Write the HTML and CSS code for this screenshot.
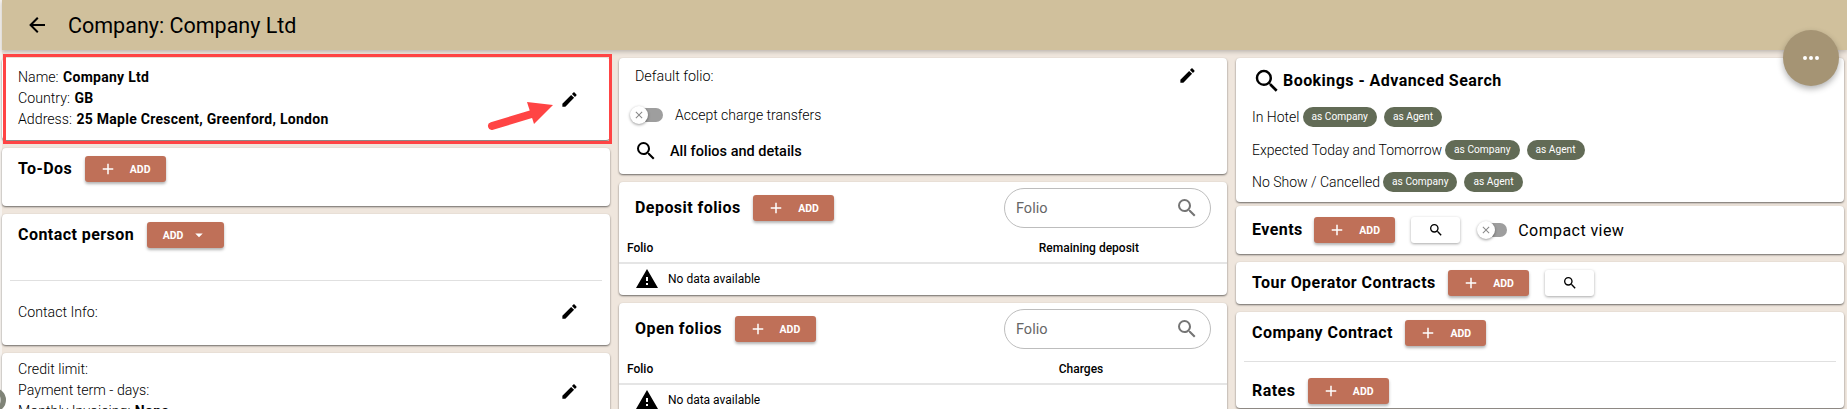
FILE: index.html
```html
<!DOCTYPE html>
<html lang="en">
<head>
  <meta charset="UTF-8">
  <title>Company: Company Ltd</title>
  <link rel="stylesheet" href="styles.css">
</head>
<body>

  <svg class="sprite" xmlns="http://www.w3.org/2000/svg">
    <symbol id="i-back" viewBox="0 0 24 24"><path d="M20,11V13H8L13.5,18.5L12.08,19.92L4.16,12L12.08,4.08L13.5,5.5L8,11H20Z"/></symbol>
    <symbol id="i-pencil" viewBox="0 0 24 24"><path d="M20.71,7.04C21.1,6.65 21.1,6 20.71,5.63L18.37,3.29C18,2.9 17.35,2.9 16.96,3.29L15.12,5.12L18.87,8.87M3,17.25V21H6.75L17.81,9.93L14.06,6.18L3,17.25Z"/></symbol>
    <symbol id="i-search" viewBox="0 0 24 24"><path d="M9.5,3A6.5,6.5 0 0,1 16,9.5C16,11.11 15.41,12.59 14.44,13.73L14.71,14H15.5L20.5,19L19,20.5L14,15.5V14.71L13.73,14.44C12.59,15.41 11.11,16 9.5,16A6.5,6.5 0 0,1 3,9.5A6.5,6.5 0 0,1 9.5,3M9.5,5C7,5 5,7 5,9.5C5,12 7,14 9.5,14C12,14 14,12 14,9.5C14,7 12,5 9.5,5Z"/></symbol>
    <symbol id="i-alert" viewBox="0 0 24 24"><path d="M13,14H11V10H13M13,18H11V16H13M1,21H23L12,2L1,21Z"/></symbol>
    <symbol id="i-plus" viewBox="0 0 24 24"><path d="M19,13H13V19H11V13H5V11H11V5H13V11H19V13Z"/></symbol>
    <symbol id="i-close" viewBox="0 0 24 24"><path d="M19,6.41L17.59,5L12,10.59L6.41,5L5,6.41L10.59,12L5,17.59L6.41,19L12,13.41L17.59,19L19,17.59L13.41,12L19,6.41Z"/></symbol>
    <symbol id="i-caret" viewBox="0 0 24 24"><path d="M7,10L12,15L17,10H7Z"/></symbol>
    <symbol id="i-dots" viewBox="0 0 24 24"><path d="M16,12A2,2 0 0,1 18,10A2,2 0 0,1 20,12A2,2 0 0,1 18,14A2,2 0 0,1 16,12M10,12A2,2 0 0,1 12,10A2,2 0 0,1 14,12A2,2 0 0,1 12,14A2,2 0 0,1 10,12M4,12A2,2 0 0,1 6,10A2,2 0 0,1 8,12A2,2 0 0,1 6,14A2,2 0 0,1 4,12Z"/></symbol>
  </svg>

  <header class="topbar">
    <svg class="back-icon"><use href="#i-back"/></svg>
    <h1 class="page-title">Company: Company Ltd</h1>
  </header>

  <button class="fab"><svg class="fab-icon"><use href="#i-dots"/></svg></button>
  <div class="edge-dot"></div>

  <main class="columns">

    <section class="column">
      <div class="card card-company">
        <div class="info-lines">
          <div>Name: <b>Company Ltd</b></div>
          <div>Country: <b>GB</b></div>
          <div>Address: <b>25 Maple Crescent, Greenford, London</b></div>
        </div>
        <svg class="pencil"><use href="#i-pencil"/></svg>
        <div class="red-frame"></div>
        <svg class="red-arrow" viewBox="0 0 76 32">
          <path d="M5 26 L48 13" stroke="#ff4444" stroke-width="8" stroke-linecap="round" fill="none"/>
          <path d="M40 2 L66 5 L47 24 Z" fill="#ff4444"/>
        </svg>
      </div>

      <div class="card card-todos">
        <div class="title-row">
          <h2 class="card-title">To-Dos</h2>
          <button class="btn-add"><svg class="plus"><use href="#i-plus"/></svg><span>ADD</span></button>
        </div>
      </div>

      <div class="card card-contact">
        <div class="title-row">
          <h2 class="card-title">Contact person</h2>
          <button class="btn-add btn-menu"><span>ADD</span><svg class="caret"><use href="#i-caret"/></svg></button>
        </div>
        <hr class="divider divider-contact">
        <div class="contact-row">
          <span>Contact Info:</span>
          <svg class="pencil"><use href="#i-pencil"/></svg>
        </div>
      </div>

      <div class="card card-credit">
        <div class="info-lines">
          <div>Credit limit:</div>
          <div>Payment term - days:</div>
          <div>Monthly Invoicing: <b>None</b></div>
        </div>
        <svg class="pencil"><use href="#i-pencil"/></svg>
      </div>
    </section>

    <section class="column">
      <div class="card card-folio">
        <div class="folio-line">
          <span>Default folio:</span>
          <svg class="pencil"><use href="#i-pencil"/></svg>
        </div>
        <div class="switch-line">
          <span class="switch"><span class="switch-thumb"><svg class="switch-x"><use href="#i-close"/></svg></span></span>
          <span>Accept charge transfers</span>
        </div>
        <div class="all-folios">
          <svg class="search-icon"><use href="#i-search"/></svg>
          <b>All folios and details</b>
        </div>
      </div>

      <div class="card card-table">
        <div class="table-head">
          <div class="title-row">
            <h2 class="card-title">Deposit folios</h2>
            <button class="btn-add"><svg class="plus"><use href="#i-plus"/></svg><span>ADD</span></button>
          </div>
          <div class="folio-search"><span>Folio</span><svg class="field-icon"><use href="#i-search"/></svg></div>
        </div>
        <div class="col-heads"><span>Folio</span><span class="col-deposit">Remaining deposit</span></div>
        <div class="no-data"><svg class="alert"><use href="#i-alert"/></svg><span>No data available</span></div>
      </div>

      <div class="card card-table">
        <div class="table-head">
          <div class="title-row">
            <h2 class="card-title">Open folios</h2>
            <button class="btn-add"><svg class="plus"><use href="#i-plus"/></svg><span>ADD</span></button>
          </div>
          <div class="folio-search"><span>Folio</span><svg class="field-icon"><use href="#i-search"/></svg></div>
        </div>
        <div class="col-heads"><span>Folio</span><span class="col-charges">Charges</span></div>
        <div class="no-data"><svg class="alert"><use href="#i-alert"/></svg><span>No data available</span></div>
      </div>
    </section>

    <section class="column">
      <div class="card card-bookings">
        <div class="bookings-title">
          <svg class="bookings-icon"><use href="#i-search"/></svg>
          <h2 class="card-title">Bookings - Advanced Search</h2>
        </div>
        <div class="chip-row"><span>In Hotel</span><span class="chip">as Company</span><span class="chip">as Agent</span></div>
        <div class="chip-row"><span>Expected Today and Tomorrow</span><span class="chip">as Company</span><span class="chip">as Agent</span></div>
        <div class="chip-row"><span>No Show / Cancelled</span><span class="chip">as Company</span><span class="chip">as Agent</span></div>
      </div>

      <div class="card card-events">
        <div class="title-row">
          <h2 class="card-title">Events</h2>
          <button class="btn-add"><svg class="plus"><use href="#i-plus"/></svg><span>ADD</span></button>
          <button class="btn-search"><svg class="btn-search-icon"><use href="#i-search"/></svg></button>
          <span class="switch"><span class="switch-thumb"><svg class="switch-x"><use href="#i-close"/></svg></span></span>
          <span class="compact-label">Compact view</span>
        </div>
      </div>

      <div class="card card-tour">
        <div class="title-row">
          <h2 class="card-title">Tour Operator Contracts</h2>
          <button class="btn-add"><svg class="plus"><use href="#i-plus"/></svg><span>ADD</span></button>
          <button class="btn-search"><svg class="btn-search-icon"><use href="#i-search"/></svg></button>
        </div>
      </div>

      <div class="card card-contract">
        <div class="title-row">
          <h2 class="card-title">Company Contract</h2>
          <button class="btn-add"><svg class="plus"><use href="#i-plus"/></svg><span>ADD</span></button>
        </div>
        <hr class="divider divider-contract">
        <div class="title-row">
          <h2 class="card-title">Rates</h2>
          <button class="btn-add"><svg class="plus"><use href="#i-plus"/></svg><span>ADD</span></button>
        </div>
      </div>
    </section>

  </main>

</body>
</html>
```

FILE: styles.css
```css
* {
  box-sizing: border-box;
}

html, body {
  height: 409px;
  overflow: hidden;
}

body {
  margin: 0;
  padding-left: 2px;
  background: #f6f2ee;
  font-family: Roboto, sans-serif;
  font-size: 14px;
  color: #000;
  position: relative;
}

b {
  font-weight: 700;
}

.sprite {
  display: none;
}

/* header */
.topbar {
  height: 50px;
  background: #d0c09c;
  display: flex;
  align-items: center;
  padding-left: 23px;
  box-shadow: 0 2px 4px rgba(0,0,0,0.2);
  position: relative;
}

.back-icon {
  width: 24px;
  height: 24px;
}

.page-title {
  margin: 0 0 0 19px;
  font-size: 21.5px;
  font-weight: 400;
}

.fab {
  position: absolute;
  top: 30px;
  left: 1783px;
  width: 56px;
  height: 56px;
  border: none;
  border-radius: 50%;
  background: #a59474;
  box-shadow: 0 3px 6px rgba(0,0,0,0.3);
  display: flex;
  align-items: center;
  justify-content: center;
  z-index: 5;
}

.fab-icon {
  width: 24px;
  height: 24px;
  fill: #fff;
}

.edge-dot {
  position: absolute;
  left: -18px;
  top: 388px;
  width: 24px;
  height: 24px;
  border-radius: 50%;
  border: 5px solid #7f8377;
  background: #c4c6bf;
  z-index: 5;
}

/* columns */
.columns {
  display: grid;
  grid-template-columns: repeat(3, 1fr);
  column-gap: 9px;
  padding: 8px 3px 0 0;
  background: #efe6dd;
  height: 359px;
}

.column {
  display: flex;
  flex-direction: column;
  gap: 8px;
  min-width: 0;
}

.card {
  background: #fff;
  border-radius: 4px;
  box-shadow: 0 1px 2px rgba(0,0,0,0.55);
  position: relative;
  flex: none;
}

.title-row {
  display: flex;
  align-items: center;
}

.card-title {
  margin: -2px 0 0;
  font-size: 16px;
  font-weight: 700;
  letter-spacing: 0.45px;
  white-space: nowrap;
}

.btn-add {
  width: 81px;
  height: 26px;
  margin-left: 12.5px;
  padding: 0 0 0 14px;
  border: none;
  border-radius: 3px;
  background: #bf7058;
  color: #fff;
  font-family: Roboto, sans-serif;
  font-size: 10.5px;
  font-weight: 700;
  display: flex;
  align-items: center;
  gap: 13px;
  box-shadow: 0 2px 3px rgba(0,0,0,0.3);
}

.plus {
  width: 18px;
  height: 18px;
  fill: #fff;
}

.btn-menu {
  width: 77px;
  padding-left: 16px;
  gap: 7px;
}

.caret {
  width: 18px;
  height: 18px;
  fill: #fff;
}

.btn-search {
  width: 49px;
  height: 26px;
  margin-left: 16px;
  padding: 0;
  border: none;
  border-radius: 3px;
  background: #fff;
  box-shadow: 0 1px 3px rgba(0,0,0,0.35);
  display: flex;
  align-items: center;
  justify-content: center;
}

.btn-search-icon {
  width: 16px;
  height: 16px;
}

.pencil {
  width: 19px;
  height: 19px;
  flex: none;
}

.divider {
  border: none;
  border-top: 1px solid #e0e0e0;
  margin: 0;
}

.info-lines {
  line-height: 21px;
  font-size: 14.2px;
  font-weight: 300;
}

.info-lines b {
  font-size: 14px;
  font-weight: 700;
  letter-spacing: 0.27px;
  margin-left: 1px;
}

/* first column */
.card-company {
  height: 82px;
  padding: 9px 0 0 16px;
}

.card-company .pencil {
  position: absolute;
  right: 31px;
  top: 32px;
}

.red-frame {
  position: absolute;
  top: -4px;
  left: 1px;
  right: -2px;
  bottom: -4px;
  border: 3px solid #ff4444;
}

.red-arrow {
  position: absolute;
  left: 485px;
  top: 42px;
  width: 76px;
  height: 32px;
}

.card-todos {
  height: 58px;
  padding: 8px 16px;
}

.card-contact {
  height: 131px;
  padding: 8px 16px 0;
}

.divider-contact {
  margin: 32px -8px 0;
}

.contact-row {
  display: flex;
  justify-content: space-between;
  align-items: center;
  margin-top: 21px;
  font-size: 14.2px;
  font-weight: 300;
  padding-right: 15px;
}

.card-credit {
  height: 70px;
  padding: 6px 0 0 16px;
}

.card-credit .pencil {
  position: absolute;
  right: 31px;
  top: 29px;
}

/* second column */
.card-folio {
  height: 116px;
  padding: 8px 16px 0;
  font-weight: 300;
}

.folio-line {
  display: flex;
  justify-content: space-between;
  align-items: center;
  padding-right: 14px;
  font-size: 14.3px;
}

.switch-line {
  display: flex;
  align-items: center;
  margin-top: 22px;
  gap: 12px;
}

.switch {
  width: 28px;
  height: 14px;
  border-radius: 7px;
  background: #9e9e9e;
  position: relative;
  flex: none;
}

.switch-thumb {
  position: absolute;
  left: -5px;
  top: -2px;
  width: 18px;
  height: 18px;
  border-radius: 50%;
  background: #fff;
  box-shadow: 0 1px 3px rgba(0,0,0,0.4);
  display: flex;
  align-items: center;
  justify-content: center;
}

.switch-x {
  width: 12px;
  height: 12px;
  fill: #888;
}

.all-folios {
  display: flex;
  align-items: center;
  margin-top: 16px;
  gap: 12px;
}

.all-folios b {
  font-size: 14.5px;
  font-weight: 500;
}

.search-icon {
  width: 24px;
  height: 24px;
  margin-left: -1px;
}

.card-table {
  height: 113px;
}

.table-head {
  display: flex;
  justify-content: space-between;
  align-items: center;
  height: 52px;
  padding: 0 16px;
}

.folio-search {
  width: 207px;
  height: 40px;
  border: 1px solid #bdbdbd;
  border-radius: 20px;
  display: flex;
  align-items: center;
  justify-content: space-between;
  padding: 0 11px;
  font-size: 14.5px;
  color: #666;
  font-weight: 400;
}

.field-icon {
  width: 24px;
  height: 24px;
  fill: #757575;
}

.col-heads {
  display: flex;
  height: 30px;
  padding-left: 8px;
  font-size: 12px;
  font-weight: 500;
  align-items: center;
  border-bottom: 2px solid #e5e5e5;
}

.col-deposit {
  margin-left: 385.5px;
}

.col-charges {
  margin-left: 405.5px;
}

.no-data {
  display: flex;
  align-items: center;
  height: 29px;
  padding-left: 16px;
  font-size: 12px;
  gap: 9px;
}

.alert {
  width: 24px;
  height: 24px;
}

/* third column */
.card-bookings {
  height: 144px;
  padding: 8px 16px 0;
  margin-bottom: -4px;
}

.bookings-title {
  display: flex;
  align-items: center;
  gap: 1px;
}

.bookings-icon {
  width: 30px;
  height: 30px;
}

.chip-row {
  display: flex;
  align-items: center;
  height: 20px;
  margin-top: 12.5px;
  font-weight: 300;
  white-space: nowrap;
}

.bookings-title + .chip-row {
  margin-top: 11px;
}

.chip {
  height: 20px;
  line-height: 20px;
  padding: 0 9px;
  margin-left: 7px;
  border-radius: 10px;
  background: #626b56;
  color: #fff;
  font-size: 10.2px;
  font-weight: 400;
}

.chip-row .chip:nth-child(2) {
  margin-left: 3px;
}

.card-events {
  height: 48px;
  padding: 11px 16px 0;
}

.card-events .btn-add {
  margin-left: 11.5px;
}

.card-events .switch {
  width: 25px;
  margin-left: 22px;
}

.compact-label {
  font-size: 16px;
  margin-left: 11px;
  letter-spacing: 0.42px;
}

.card-tour {
  height: 42px;
  padding: 8px 16px 0;
}

.card-contract {
  height: 96px;
  padding: 8px 8px 0 16px;
}

.divider-contract {
  margin: 15px 0 0 -8px;
}

.card-contract .divider + .title-row {
  margin-top: 16px;
}
```
